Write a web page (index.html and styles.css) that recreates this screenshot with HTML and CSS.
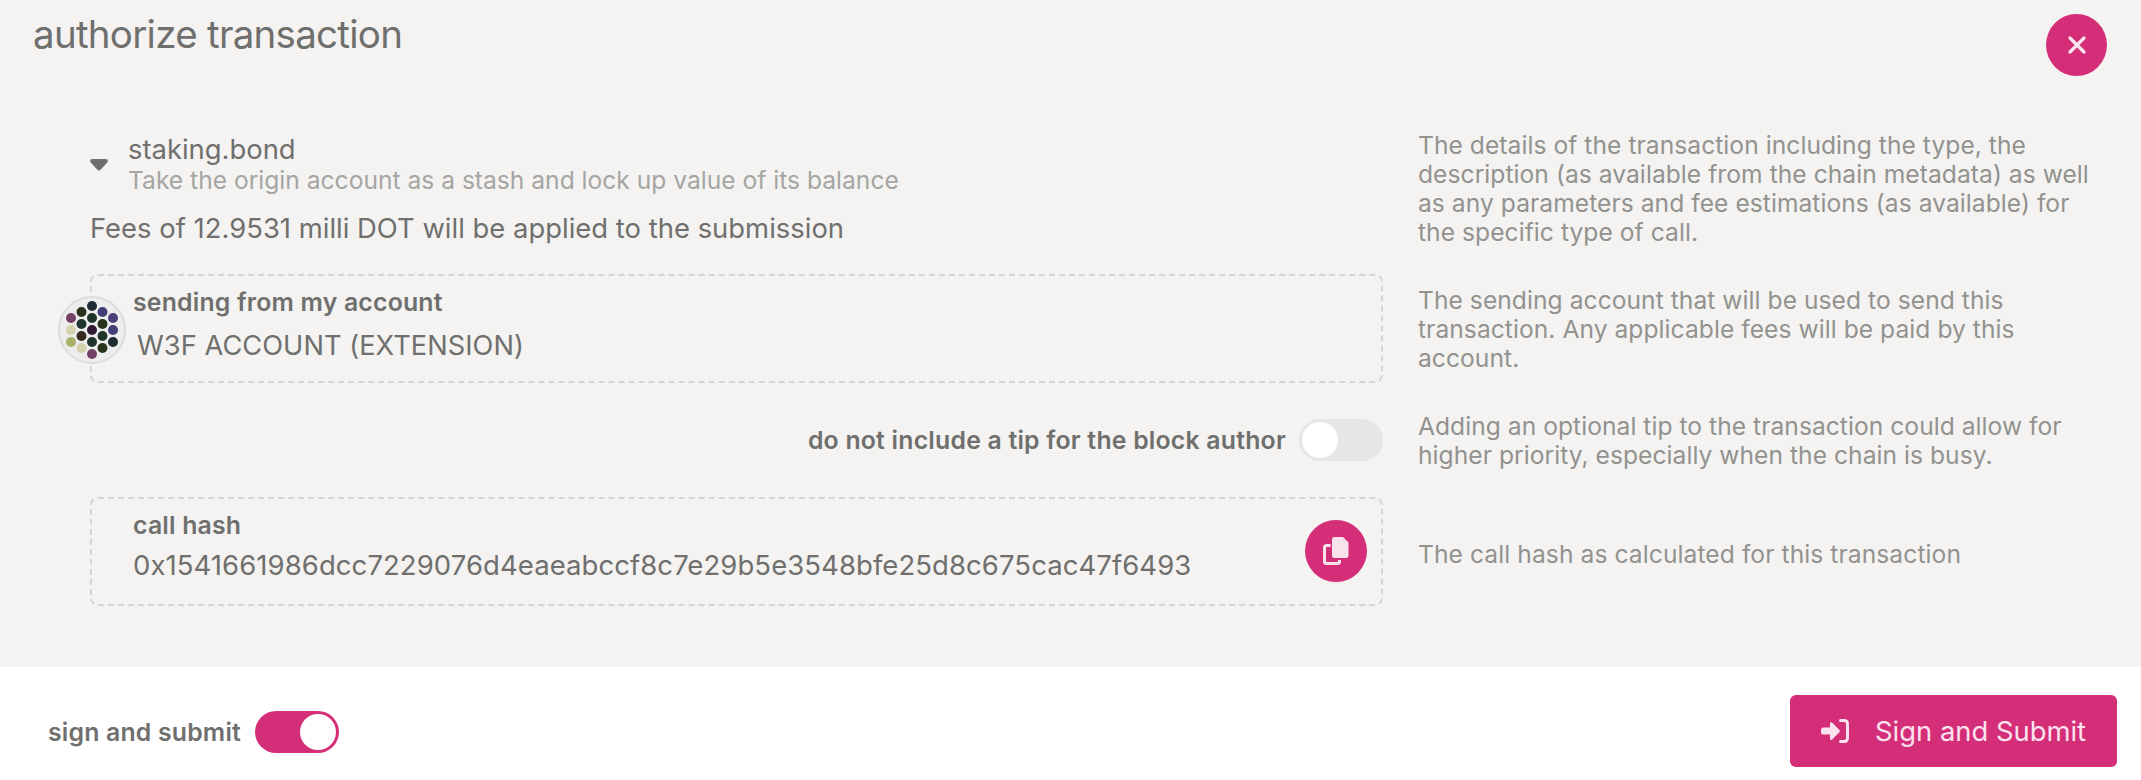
FILE: index.html
```html
<!DOCTYPE html>
<html lang="en">
<head>
<meta charset="utf-8">
<title>authorize transaction</title>
<link rel="stylesheet" href="styles.css">
</head>
<body>
<main class="modal">
  <header class="modal-header">
    <h1 class="title">authorize transaction</h1>
    <button class="round-button close" aria-label="close">
      <svg width="18" height="18" viewBox="0 0 18 18"><path d="M2 2 16 16M16 2 2 16" fill="none" stroke="#fbe6f0" stroke-width="3.200" stroke-linecap="round"/></svg>
    </button>
  </header>
  <div class="content">
    <section class="row row-details">
      <div class="details">
        <div class="call">
          <svg class="caret" width="18" height="12" viewBox="0 0 18 12"><path d="M2 0H16Q18 .2 17.800 2 17.600 3 17 3.700L10.600 10.800Q9 12.200 7.400 10.800L1 3.700Q.4 3 .2 2 0 .2 2 0Z" fill="#6f6f6e"/></svg>
          <div>
            <div class="method">staking.bond</div>
            <div class="summary">Take the origin account as a stash and lock up value of its balance</div>
          </div>
        </div>
        <div class="fees">Fees of 12.9531 milli DOT will be applied to the submission</div>
      </div>
      <p class="hint">The details of the transaction including the type, the<br>description (as available from the chain metadata) as well<br>as any parameters and fee estimations (as available) for<br>the specific type of call.</p>
    </section>
    <section class="row row-account">
      <div class="box">
        <svg class="identicon" width="68" height="68" viewBox="-34 -34 68 68">
          <circle r="33" fill="#ededed" stroke="#dcdcdc" stroke-width="2"/>
          <g fill="#1f2d33"><circle cy="-24" r="5"/><circle cx="21" cy="12" r="5"/></g>
          <g fill="#27331d"><circle cx="-10.500" cy="-18" r="5"/><circle cx="10.500" cy="-6" r="5"/><circle cx="10.500" cy="18" r="5"/></g>
          <g fill="#413e78"><circle cx="10.500" cy="-18" r="5"/><circle cx="21" cy="0" r="5"/></g>
          <circle cx="21" cy="-12" r="5" fill="#4b3d79"/>
          <g fill="#734266"><circle cx="-21" cy="-12" r="5"/><circle cy="24" r="5"/></g>
          <g fill="#20352a"><circle cy="-12" r="5"/><circle cx="10.500" cy="6" r="5"/></g>
          <g fill="#20342f"><circle cx="-10.500" cy="-6" r="5"/><circle cy="12" r="5"/></g>
          <g fill="#d5d2ae"><circle cx="-21" cy="0" r="5"/><circle cx="-10.500" cy="18" r="5"/></g>
          <circle r="5" fill="#311a33"/>
          <circle cx="-10.500" cy="6" r="5" fill="#372a1d"/>
          <circle cx="-21" cy="12" r="5" fill="#a8b069"/>
        </svg>
        <div class="box-text">
          <div class="label">sending from my account</div>
          <div class="account">W3F ACCOUNT (EXTENSION)</div>
        </div>
      </div>
      <p class="hint hint-account">The sending account that will be used to send this<br>transaction. Any applicable fees will be paid by this<br>account.</p>
    </section>
    <section class="row row-tip">
      <div class="tip">
        <span class="label">do not include a tip for the block author</span>
        <span class="toggle"><span class="knob"></span></span>
      </div>
      <p class="hint hint-tip">Adding an optional tip to the transaction could allow for<br>higher priority, especially when the chain is busy.</p>
    </section>
    <section class="row row-hash">
      <div class="box">
        <div class="box-text">
          <div class="label">call hash</div>
          <div class="hash">0x1541661986dcc7229076d4eaeabccf8c7e29b5e3548bfe25d8c675cac47f6493</div>
        </div>
        <button class="round-button" aria-label="copy">
          <svg width="26" height="28" viewBox="0 0 26 28"><path d="M11.500 0H20L25.500 5.500V18.500Q25.500 21 23 21H11.500Q9 21 9 18.500V2.500Q9 0 11.500 0Z" fill="#f8e2ec"/><path d="M7.500 8.500H3.500Q1.500 8.500 1.500 10.500V24.500Q1.500 26.500 3.500 26.500H14.500Q16.500 26.500 16.500 24.500V23" fill="none" stroke="#f8e2ec" stroke-width="3"/></svg>
        </button>
      </div>
      <p class="hint hint-hash">The call hash as calculated for this transaction</p>
    </section>
  </div>
  <footer class="modal-footer">
    <div class="sign">
      <span class="label">sign and submit</span>
      <span class="toggle toggle-on"><span class="knob"></span></span>
    </div>
    <button class="submit">
      <svg width="28" height="24" viewBox="0 0 28 24"><path d="M2.500 8.500H9V4.200Q9.300 2.500 11 3.500L18.500 11Q19.400 12 18.500 13L11 20.700Q9.300 21.500 9 19.800V15.500H2.500Q0 15.500 0 13V11Q0 8.500 2.500 8.500Z" fill="#fbe2ee"/><path d="M19.500 1.500H23Q26.500 1.500 26.500 5V19Q26.500 22.500 23 22.500H19.500" fill="none" stroke="#fbe2ee" stroke-width="3" stroke-linecap="round"/></svg>
      <span class="submit-text">Sign and Submit</span>
    </button>
  </footer>
</main>
</body>
</html>
```
FILE: styles.css
```css
* { box-sizing: border-box; }
body { margin: 0; font-family: Inter, "Liberation Sans", sans-serif; color: #6f6f6e; }
.modal { display: flex; flex-direction: column; width: 2141px; height: 780px; background: #f4f3f1; overflow: hidden; }
.modal-header { display: flex; justify-content: space-between; height: 125px; padding: 14px 34px 0 33px; }
.title { margin: -4px 0 0; font-size: 38.5px; line-height: 48px; font-weight: 400; letter-spacing: -0.72px; }
.round-button { display: flex; flex: none; align-items: center; justify-content: center; width: 62px; height: 62px; padding: 0; border: 0; border-radius: 50%; background: #d42e78; }
.close { width: 61px; }
.content { height: 542px; padding-left: 90px; }
.row { display: grid; grid-template-columns: 1293px 1fr; column-gap: 35px; align-items: start; }
.row-details { height: 149px; }
.row-account { height: 145px; }
.row-tip { height: 78px; }
.details { padding-top: 8px; }
.call { display: flex; gap: 20px; }
.caret { margin-top: 26px; }
.method { font-size: 27.4px; line-height: 32px; }
.summary { font-size: 24.6px; line-height: 30px; color: #a5a5a3; }
.fees { margin-top: 16px; font-size: 27.4px; line-height: 34px; letter-spacing: 0.02px; }
.hint { margin: 6px 0 0; font-size: 24.6px; line-height: 29px; letter-spacing: 0.05px; color: #92928f; white-space: nowrap; }
.hint-account { margin-top: 12px; }
.hint-tip { margin-top: -7px; letter-spacing: 0.04px; }
.hint-hash { margin-top: 43px; letter-spacing: 0.08px; }
.box { position: relative; display: flex; justify-content: space-between; height: 109px; padding: 11px 14px 0 41px; border: 2px dashed #d5d5d3; border-radius: 8px; }
.identicon { position: absolute; left: -34px; top: 20px; }
.label { font-size: 24.8px; line-height: 30px; font-weight: 600; letter-spacing: 0.2px; }
.account { padding: 11px 0 0 4px; font-size: 27.2px; line-height: 36px; letter-spacing: 0.06px; }
.hash { padding-top: 7px; font-size: 27.5px; line-height: 36px; letter-spacing: 0.07px; }
.box .round-button { margin-top: 10px; }
.tip { display: flex; align-items: center; justify-content: flex-end; gap: 13px; height: 42px; }
.tip .label { letter-spacing: 0.22px; }
.toggle { display: flex; flex: none; width: 84px; height: 42px; padding: 3px; border-radius: 21px; background: #e4e6e8; }
.toggle-on { justify-content: flex-end; background: #d42e78; }
.knob { width: 36px; height: 36px; border-radius: 50%; background: #fff; }
.modal-footer { display: flex; justify-content: space-between; height: 113px; padding: 28px 24px 0 48px; background: #fff; }
.sign { display: flex; align-items: center; gap: 14px; height: 74px; }
.submit { display: flex; align-items: center; gap: 26px; width: 327px; height: 72px; padding: 0 0 0 31px; border: 0; border-radius: 6px; background: #d42e78; color: #fbe2ee; font-family: inherit; font-size: 27.4px; }
.submit-text { white-space: nowrap; }
```
